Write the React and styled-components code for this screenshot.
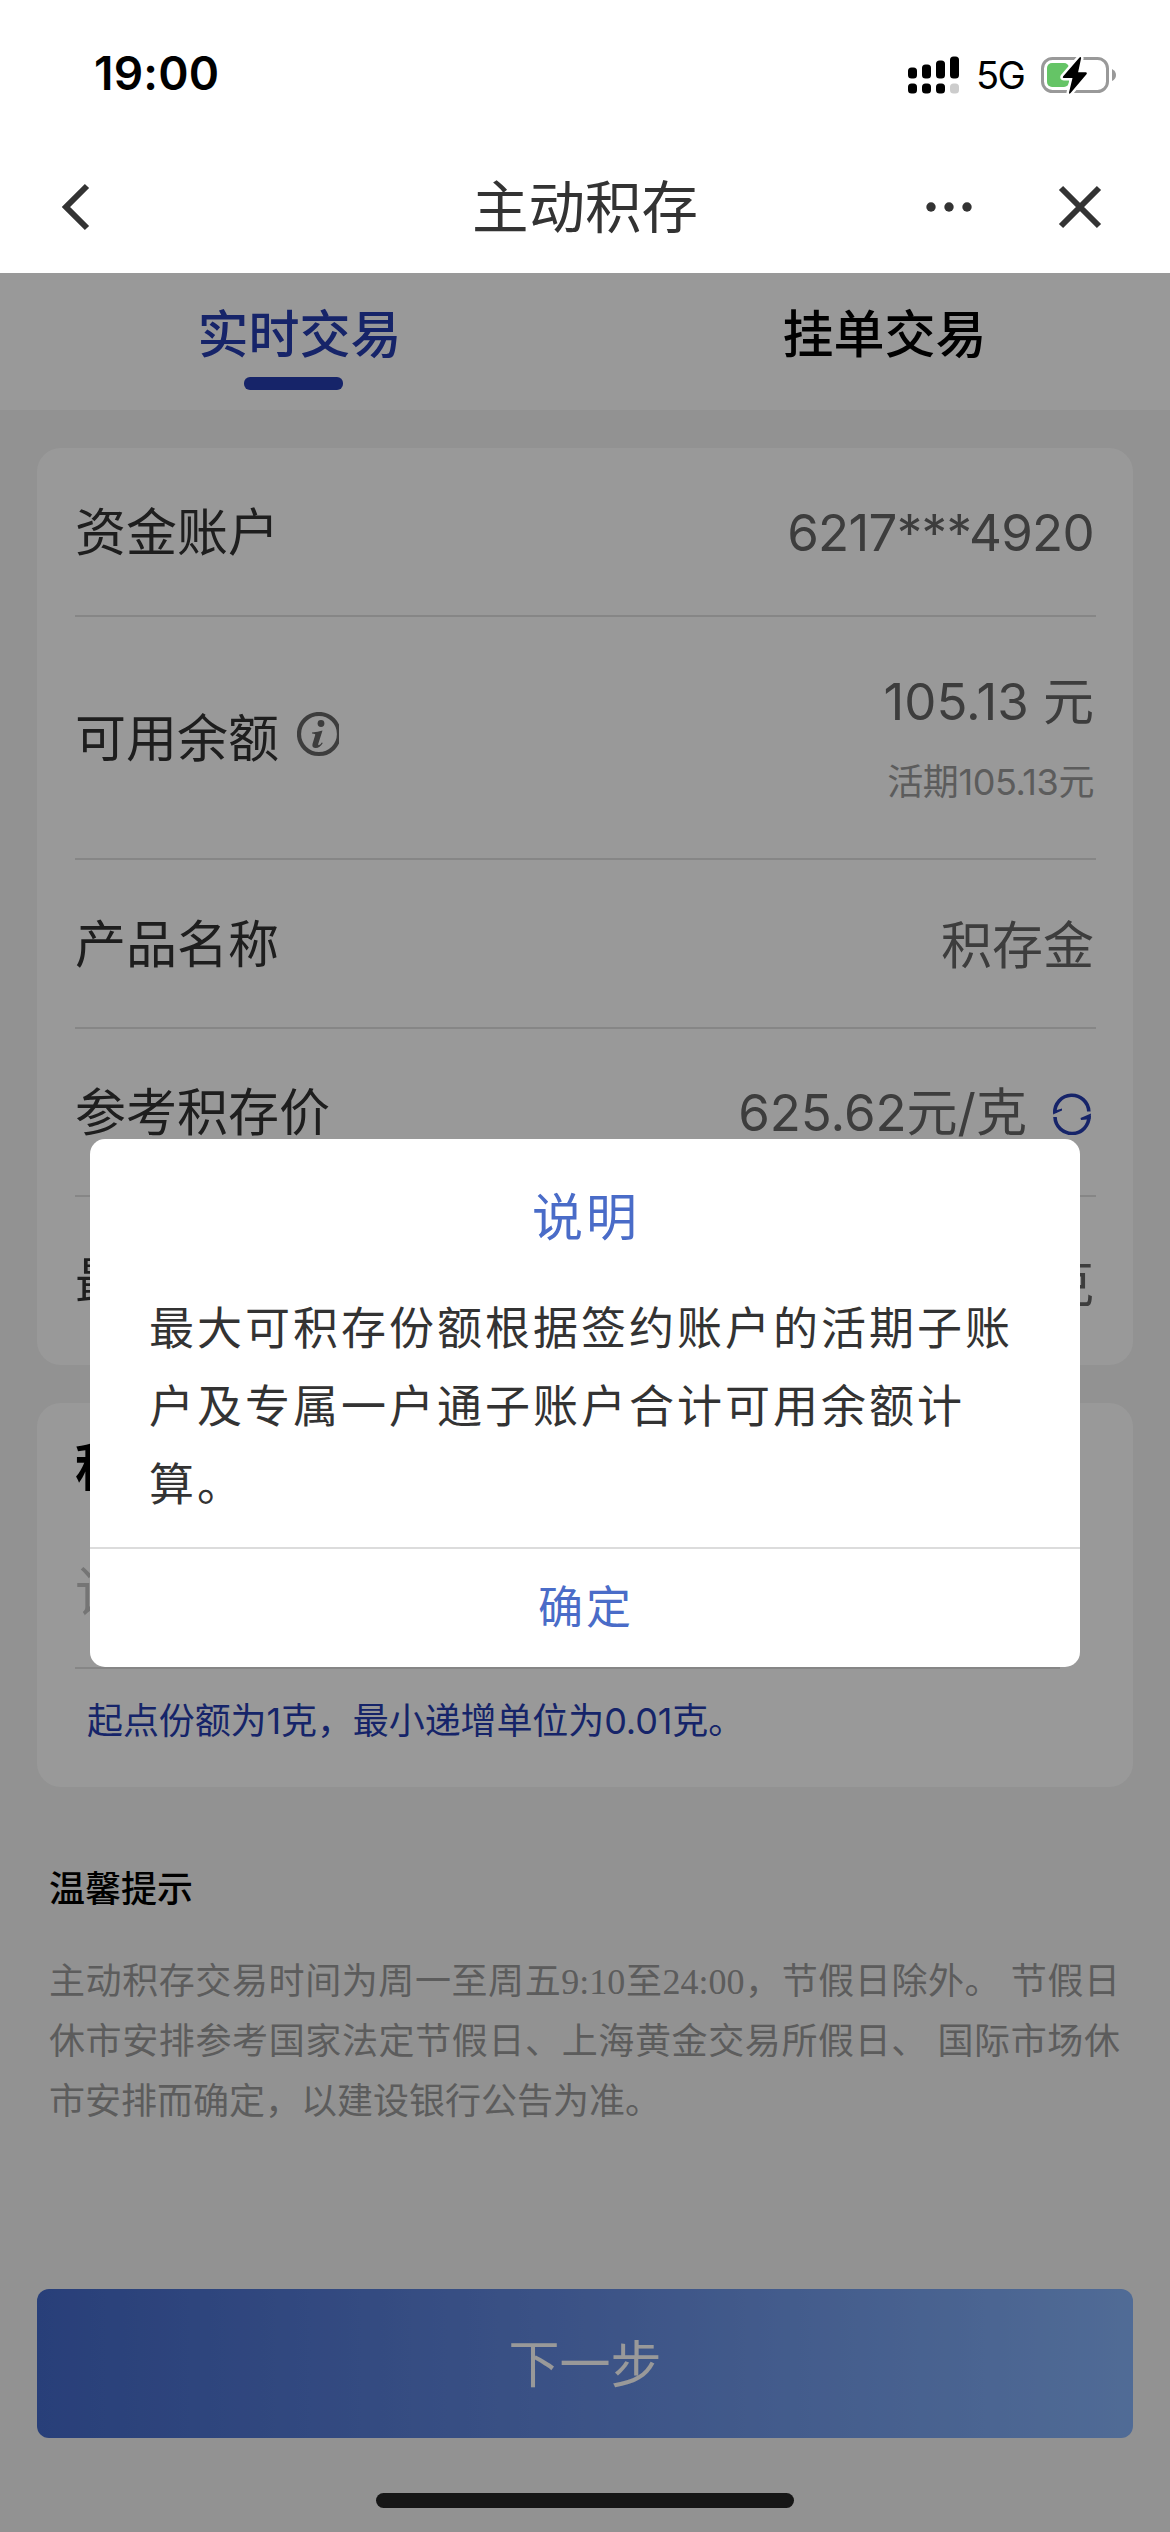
import React from "react";
import styled, { createGlobalStyle } from "styled-components";

const GlobalStyle = createGlobalStyle`
  * { box-sizing: border-box; }
  body {
    margin: 0;
    background: #f4f4f4;
    font-family: Inter, "Noto Sans CJK SC", sans-serif;
  }
`;

const Screen = styled.div`
  width: 1170px;
  height: 2532px;
  display: flex;
  flex-direction: column;
  overflow: hidden;
`;

const StatusBar = styled.header`
  height: 144px;
  padding: 5px 53px 0 94px;
  background: #fff;
  display: flex;
  align-items: center;
  justify-content: space-between;
`;

const Clock = styled.span`
  margin-bottom: 3px;
  font-size: 46px;
  font-weight: 600;
  letter-spacing: 0.2px;
  color: #000;
`;

const StatusIcons = styled.div`
  display: flex;
  align-items: center;
`;

const Network = styled.span`
  margin: 1px 17px 0 17px;
  width: 48px;
  font-size: 38px;
  line-height: 40px;
  letter-spacing: -1.5px;
  white-space: nowrap;
`;

const NavBar = styled.nav`
  height: 129px;
  padding: 0 66px 3px 60px;
  background: #fff;
  color: #333;
  display: grid;
  grid-template-columns: 260px 1fr 254px;
  align-items: center;
`;

const NavTitle = styled.h1`
  margin: 0;
  padding-top: 1px;
  font-size: 56.5px;
  font-weight: 400;
  line-height: 80px;
  text-align: center;
`;

const NavActions = styled.div`
  display: flex;
  align-items: center;
  justify-content: flex-end;
  gap: 84px;
`;

const Body = styled.main`
  position: relative;
  flex: 1;
  background: #f4f4f4;
`;

const Content = styled.div`
  height: 100%;
  display: flex;
  flex-direction: column;
`;

const Tabs = styled.div`
  height: 137px;
  background: #fff;
  display: grid;
  grid-template-columns: 1fr 1fr;
`;

const Tab = styled.div`
  display: flex;
  flex-direction: column;
  align-items: center;
  padding: 25px 0 0 14px;
  font-size: 51px;
  line-height: 74px;
  font-weight: 500;
  color: ${(p) => (p.$active ? "#263caf" : "#000")};
`;

const TabMark = styled.span`
  width: 99px;
  height: 13px;
  margin: 5px 13px 0 0;
  border-radius: 6px;
  background: #263caf;
`;

const Card = styled.section`
  margin: 38px 37px 0 37px;
  padding: 0 37px 0 38px;
  border-radius: 24px;
  background: #fff;

  & + & {
    height: 384px;
  }
`;

const Row = styled.div`
  height: ${(p) => p.$height || 169}px;
  display: flex;
  align-items: center;
  justify-content: space-between;
  border-bottom: ${(p) => (p.$last ? "0" : "2px solid #e0e0e0")};
`;

const Label = styled.span`
  display: flex;
  align-items: center;
  gap: 18px;
  padding-top: 2px;
  font-size: 51px;
  line-height: 74px;
  color: #333;
`;

const Value = styled.span`
  display: flex;
  align-items: center;
  gap: 25px;
  padding: ${(p) => p.$top || 0}px ${(p) => p.$right || 2}px 0 0;
  font-size: 51px;
  font-weight: 400;
  line-height: 74px;
  letter-spacing: ${(p) => p.$spacing || 0}px;
  color: #666;
`;

const Amounts = styled.div`
  display: flex;
  flex-direction: column;
  align-items: flex-end;
  padding-bottom: 2px;
`;

const SubValue = styled.span`
  padding-right: 2px;
  margin-top: 17px;
  font-size: 36px;
  font-weight: 400;
  line-height: 52px;
  letter-spacing: -0.4px;
  color: #999;
`;

const FieldTitle = styled.h2`
  margin: 0;
  padding-top: 28px;
  font-size: 51px;
  font-weight: 600;
  line-height: 74px;
  color: #000;
`;

const Field = styled.div`
  width: 985px;
  height: 164px;
  padding-top: 48px;
  border-bottom: 2px solid #e0e0e0;
  font-size: 54px;
  line-height: 80px;
  color: #c4c4c4;
`;

const FieldHint = styled.p`
  margin: 0;
  padding: 26px 0 0 12px;
  font-size: 36px;
  line-height: 52px;
  letter-spacing: -0.1px;
  color: #263caf;
  white-space: nowrap;
`;

const Tips = styled.section`
  margin: 76px 50px 0 49px;
`;

const TipsTitle = styled.h3`
  margin: 0;
  font-size: 36px;
  font-weight: 500;
  line-height: 52px;
  color: #000;
`;

const TipsText = styled.p`
  margin: 37px 0 0;
  font-family: "Liberation Serif", "Noto Sans CJK SC", serif;
  font-size: 36px;
  line-height: 60px;
  text-align: justify;
  color: #999;
`;

const NextButton = styled.button`
  height: 149px;
  margin: auto 37px 0 37px;
  padding: 2px 0 0;
  border: 0;
  border-radius: 12px;
  background: linear-gradient(90deg, #446aca 0%, #648ae0 50%, #86b3fa 100%);
  color: #fff;
  font: 400 51px/74px Inter, "Noto Sans CJK SC", sans-serif;
`;

const HomeBar = styled.div`
  width: 418px;
  height: 15px;
  margin: 55px auto 24px;
  border-radius: 8px;
  background: #262626;
`;

const Overlay = styled.div`
  position: absolute;
  inset: 0;
  padding-top: 866px;
  background: rgba(0, 0, 0, 0.4);
`;

const Dialog = styled.div`
  width: 990px;
  height: 528px;
  margin: 0 auto;
  border-radius: 15px;
  background: #fff;
  display: flex;
  flex-direction: column;
  letter-spacing: 3px;
`;

const DialogTitle = styled.h2`
  margin: 0;
  padding: 42px 0 0 2px;
  font-size: 51px;
  font-weight: 400;
  line-height: 74px;
  text-align: center;
  color: #4a6cc8;
`;

const DialogText = styled.p`
  flex: 1;
  margin: 0;
  padding: 35px 49px 0 59px;
  font-size: 45px;
  line-height: 78px;
  color: #333;
`;

const DialogAction = styled.div`
  height: 120px;
  padding-left: 2px;
  border-top: 2px solid #dcdcdc;
  font-size: 45px;
  line-height: 117px;
  text-align: center;
  color: #4a6cc8;
`;

const SignalIcon = () => (
  <svg width="51" height="38" viewBox="0 0 51 38">
    <rect x="0" y="11.5" width="9" height="11" rx="3.5" />
    <rect x="14" y="8.5" width="9" height="14" rx="3.5" />
    <rect x="28" y="4.5" width="9" height="18" rx="3.5" />
    <rect x="42" y="0.5" width="9" height="22" rx="3.5" />
    <rect x="0" y="27.5" width="9" height="10" rx="3.5" />
    <rect x="14" y="27.5" width="9" height="10" rx="3.5" />
    <rect x="28" y="27.5" width="9" height="10" rx="3.5" />
    <rect x="42" y="27.5" width="9" height="10" rx="3.5" fill="#ccc" />
  </svg>
);

const BatteryIcon = () => (
  <svg width="76" height="40" viewBox="0 0 76 40">
    <rect x="1.5" y="3.5" width="65" height="33" rx="10" fill="none" stroke="#999" strokeWidth="3" />
    <path d="M71 14q4 2 4 6t-4 6z" fill="#999" />
    <rect x="6" y="8" width="22" height="24" rx="5" fill="#65c466" />
    <path
      d="M38.500 2.500L22 21.500q-.8 1.500.8 1.500h8.700L28 37.500q-.1 2.200 1.600.6L45.700 19q.8-1.700-1-1.700h-7.600l3-14q0-2.200-1.600-.8z"
      fill="#000"
      stroke="#fff"
      strokeWidth="5"
      paintOrder="stroke"
    />
  </svg>
);

const BackIcon = () => (
  <svg width="32" height="48" viewBox="0 0 32 48" fill="none" stroke="#333" strokeWidth="6">
    <path d="M27 3L6 24l21 21" />
  </svg>
);

const MoreIcon = () => (
  <svg width="46" height="10" viewBox="0 0 46 10" fill="#333">
    <circle cx="5" cy="5" r="4.7" />
    <circle cx="23" cy="5" r="4.7" />
    <circle cx="41" cy="5" r="4.7" />
  </svg>
);

const CloseIcon = () => (
  <svg width="48" height="48" viewBox="0 0 48 48" stroke="#333" strokeWidth="6">
    <path d="M5 5l38 38M43 5L5 43" />
  </svg>
);

const InfoIcon = () => (
  <svg width="42" height="54" viewBox="0 0 42 54">
    <circle cx="22" cy="22" r="20" fill="none" stroke="#666" strokeWidth="4.200" />
    <circle cx="24" cy="11.500" r="3.400" fill="#666" />
    <path
      d="M15 20.500q6-.3 10.500-2l-4.200 13.300q-.5 1.700.8 1.300 1.400-.6 2.700-2.600l1 .6q-3 5-7 5-4.200 0-3.300-4l2.700-9q.4-1.600-3.200-1.500z"
      fill="#666"
    />
  </svg>
);

const RefreshIcon = () => (
  <svg width="40" height="44" viewBox="0 0 40 44" fill="none" stroke="#263caf" strokeWidth="3.600">
    <path d="M2.800 22A17 17 0 0 1 36.800 20.500" />
    <path d="M37 25A17 17 0 0 1 3 26" />
    <path d="M1 23.500L1.500 18.500L5 19L10 17.500V19.500Z" fill="#263caf" stroke="none" />
    <path d="M39 22.500L38.500 28L35 28.500L29 29L28.500 27Z" fill="#263caf" stroke="none" />
  </svg>
);

export default function App() {
  return (
    <>
      <GlobalStyle />
      <Screen>
        <StatusBar>
          <Clock>19:00</Clock>
          <StatusIcons>
            <SignalIcon />
            <Network>5G</Network>
            <BatteryIcon />
          </StatusIcons>
        </StatusBar>
        <NavBar>
          <BackIcon />
          <NavTitle>主动积存</NavTitle>
          <NavActions>
            <MoreIcon />
            <CloseIcon />
          </NavActions>
        </NavBar>
        <Body>
          <Content>
            <Tabs>
              <Tab $active>
                实时交易
                <TabMark />
              </Tab>
              <Tab>挂单交易</Tab>
            </Tabs>
            <Card>
              <Row>
                <Label>资金账户</Label>
                <Value $top={2} $spacing={-0.7}>6217***4920</Value>
              </Row>
              <Row $height={243}>
                <Label>
                  可用余额
                  <InfoIcon />
                </Label>
                <Amounts>
                  <Value>105.13 元</Value>
                  <SubValue>活期105.13元</SubValue>
                </Amounts>
              </Row>
              <Row>
                <Label>产品名称</Label>
                <Value $top={5}>积存金</Value>
              </Row>
              <Row $height={168}>
                <Label>参考积存价</Label>
                <Value $top={2} $right={4}>
                  625.62元/克
                  <RefreshIcon />
                </Value>
              </Row>
              <Row $height={168} $last>
                <Label>最大可积存份额</Label>
                <Value $top={5}>0.16克</Value>
              </Row>
            </Card>
            <Card>
              <FieldTitle>积存份额</FieldTitle>
              <Field>请输入</Field>
              <FieldHint>起点份额为1克，最小递增单位为0.01克。</FieldHint>
            </Card>
            <Tips>
              <TipsTitle>温馨提示</TipsTitle>
              <TipsText>
                主动积存交易时间为周一至周五9:10至24:00，节假日除外。 节假日休市安排参考国家法定节假日、上海黄金交易所假日、 国际市场休市安排而确定，以建设银行公告为准。
              </TipsText>
            </Tips>
            <NextButton>下一步</NextButton>
            <HomeBar />
          </Content>
          <Overlay>
            <Dialog>
              <DialogTitle>说明</DialogTitle>
              <DialogText>
                最大可积存份额根据签约账户的活期子账户及专属一户通子账户合计可用余额计算。
              </DialogText>
              <DialogAction>确定</DialogAction>
            </Dialog>
          </Overlay>
        </Body>
      </Screen>
    </>
  );
}
